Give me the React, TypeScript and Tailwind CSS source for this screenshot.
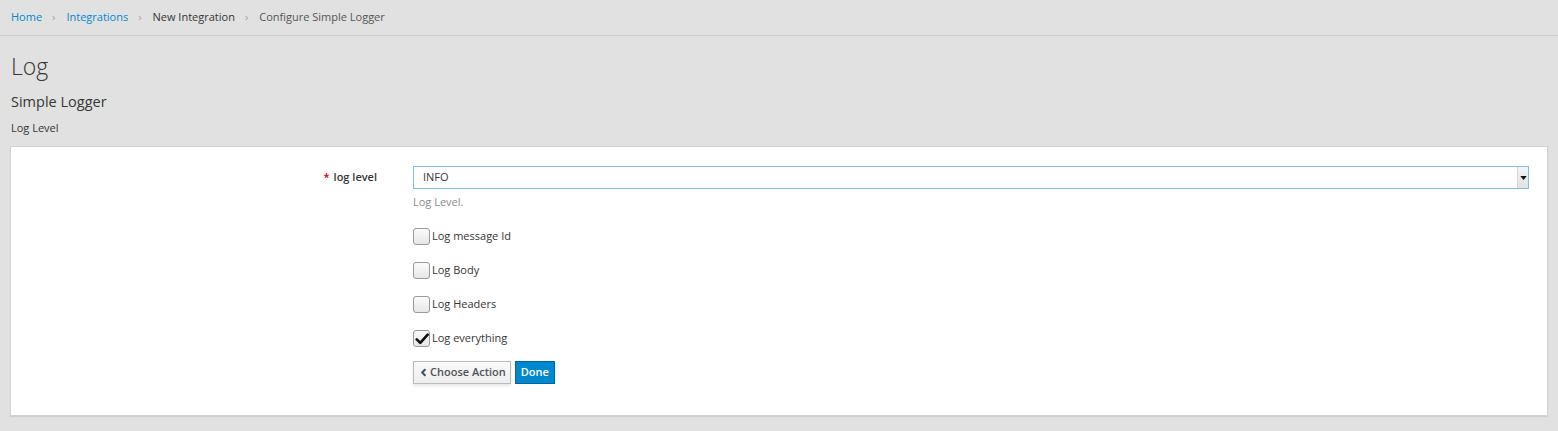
import { ChevronLeft } from 'lucide-react'

const crumbs = [
  { label: 'Home', link: true },
  { label: 'Integrations', link: true },
  { label: 'New Integration', link: false, dark: true },
  { label: 'Configure Simple Logger', link: false },
]

const options = ['Log message Id', 'Log Body', 'Log Headers', 'Log everything']

function Checkbox({ checked, label }: { checked?: boolean; label: string }) {
  return (
    <label className="flex h-[20px] items-center gap-[2px] text-[11px] text-[#363636]">
      <span className="relative flex h-[17px] w-[17px] items-center justify-center rounded-[3px] border border-[#9a9a9a] bg-gradient-to-b from-[#fbfbfb] to-[#e6e6e6]">
        {checked && (
          <svg viewBox="0 0 16 16" className="absolute left-[1px] top-[1px] h-[14px] w-[14px]">
            <path d="M2 8.5 L6 12.5 L14.5 3" fill="none" stroke="#111" strokeWidth="3" strokeLinecap="round" strokeLinejoin="round" />
          </svg>
        )}
      </span>
      <span>{label}</span>
    </label>
  )
}

export default function App() {
  return (
    <div className="min-h-screen w-full bg-[#e1e1e1] font-['Open_Sans',sans-serif] text-[#363636]">
      <nav className="flex h-[36px] items-center border-b border-[#d0d0d0] px-[11px] text-[11px]">
        {crumbs.map((c, i) => (
          <span key={c.label} className="flex items-center">
            {i > 0 && <span className="pl-[10px] pr-[11px] text-[#a0a0a0]">›</span>}
            <span className={c.link ? 'text-[#0088ce]' : c.dark ? 'text-[#363636]' : 'text-[#555]'}>
              {c.label}
            </span>
          </span>
        ))}
      </nav>

      <div className="px-[10px]">
        <h1 className="mt-[17px] pl-px text-[23px] font-light leading-[26px] text-[#363636]">Log</h1>
        <h3 className="mt-[13px] pl-px text-[14.5px] leading-[20px] text-[#363636]">Simple Logger</h3>
        <p className="mt-[8px] pl-px text-[11px] leading-[16px]">Log Level</p>

        <div className="mt-[10px] border border-[#d1d1d1] bg-white pb-[31px] pt-[19px] pr-[18px] shadow-[0_1px_1px_rgba(0,0,0,0.08)]">
          <div className="flex">
            <div className="flex h-[23px] w-[366px] shrink-0 items-center justify-end text-[11px] font-semibold">
              <span className="mr-[4px] text-[#cc0000]">*</span>
              <span>log level</span>
            </div>
            <div className="ml-[36px] flex-1">
              <div className="flex h-[23px] items-stretch border border-[#7cc0e8] bg-white">
                <span className="flex flex-1 items-center pl-[9px] text-[11px]">INFO</span>
                <span className="flex w-[11px] items-center justify-center border-l border-[#d6d6d6] bg-gradient-to-b from-[#f4f4f4] to-[#e2e2e2]">
                  <svg viewBox="0 0 8 5" className="h-[4px] w-[7px]">
                    <path d="M0 0 L8 0 L4 5 Z" fill="#111" />
                  </svg>
                </span>
              </div>
              <p className="mt-[5px] text-[11px] leading-[16px] text-[#8b8d8f]">Log Level.</p>

              <div className="mt-[16px] flex flex-col gap-[14px]">
                {options.map((o) => (
                  <Checkbox key={o} label={o} checked={o === 'Log everything'} />
                ))}
              </div>

              <div className="mt-[13px] flex gap-[4px]">
                <button className="flex h-[23px] items-center gap-[1px] border border-[#bbbbbb] bg-gradient-to-b from-[#fafafa] to-[#ededed] pl-[4px] pr-[4px] text-[11px] font-semibold text-[#4d5258] shadow-[0_2px_3px_rgba(3,3,3,0.1)]">
                  <ChevronLeft size={11} strokeWidth={4.5} />
                  Choose Action
                </button>
                <button className="flex h-[23px] items-center border border-[#00659c] bg-[#0088ce] px-[5px] text-[11px] font-semibold text-white">
                  Done
                </button>
              </div>
            </div>
          </div>
        </div>
      </div>
    </div>
  )
}
